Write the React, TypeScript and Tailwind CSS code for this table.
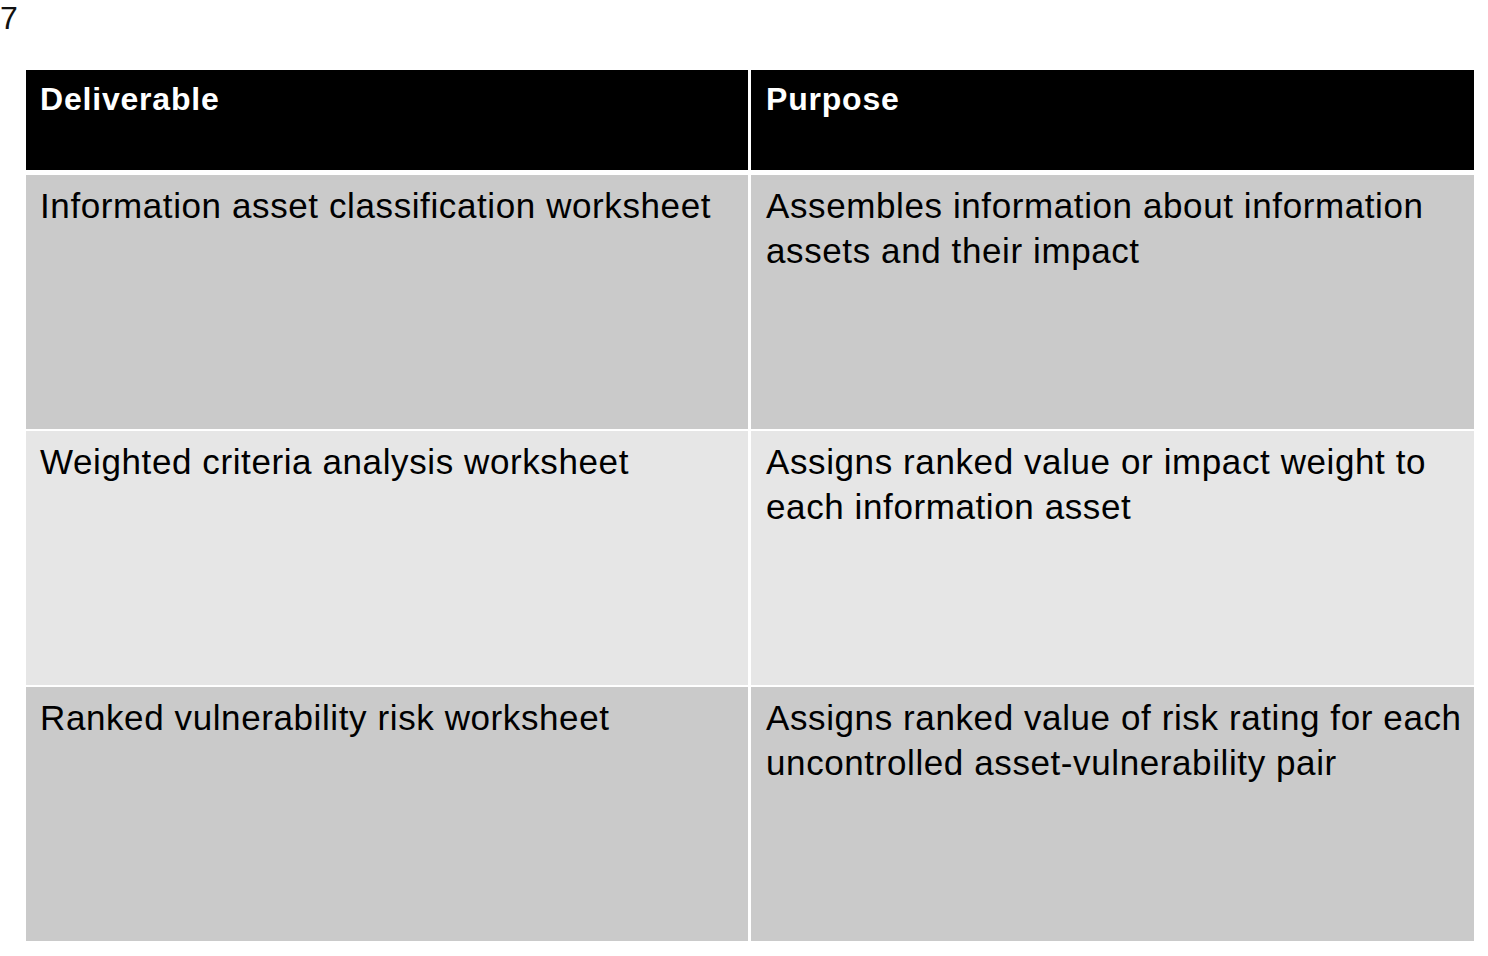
const rows = [
  {
    deliverable: "Information asset classification worksheet",
    purpose: "Assembles information about information assets and their impact",
    bg: "bg-[#cacaca]",
  },
  {
    deliverable: "Weighted criteria analysis worksheet",
    purpose: "Assigns ranked value or impact weight to each information asset",
    bg: "bg-[#e6e6e6]",
  },
  {
    deliverable: "Ranked vulnerability risk worksheet",
    purpose:
      "Assigns ranked value of risk rating for each uncontrolled asset-vulnerability pair",
    bg: "bg-[#cacaca]",
  },
];

export default function App() {
  return (
    <div className="min-h-[956px] w-[1488px] bg-white font-['Liberation_Sans',Arial,sans-serif] text-black">
      <div className="h-[70px]">
        <span className="block text-[32px] leading-[37px] text-[#111]">7</span>
      </div>

      <div className="ml-[26px] flex w-[1448px] flex-col">
        <div className="mb-[5px] grid grid-cols-[722px_723px] gap-x-[3px]">
          <div className="h-[100px] bg-black pl-[14px] pt-[7px] text-[32px] font-bold leading-[44px] tracking-[0.8px] text-white">
            Deliverable
          </div>
          <div className="h-[100px] bg-black pl-[15px] pt-[7px] text-[32px] font-bold leading-[44px] tracking-[0.8px] text-white">
            Purpose
          </div>
        </div>

        <div className="flex flex-col gap-y-[2px]">
          {rows.map((r) => (
            <div
              key={r.deliverable}
              className="grid grid-cols-[722px_723px] gap-x-[3px]"
            >
              <div
                className={`${r.bg} h-[254px] pl-[14px] pr-[8px] pt-[8px] text-[35px] leading-[45px] tracking-[0.6px]`}
              >
                {r.deliverable}
              </div>
              <div
                className={`${r.bg} h-[254px] pl-[15px] pr-[6px] pt-[8px] text-[35px] leading-[45px] tracking-[0.6px]`}
              >
                {r.purpose}
              </div>
            </div>
          ))}
        </div>
      </div>
    </div>
  );
}
